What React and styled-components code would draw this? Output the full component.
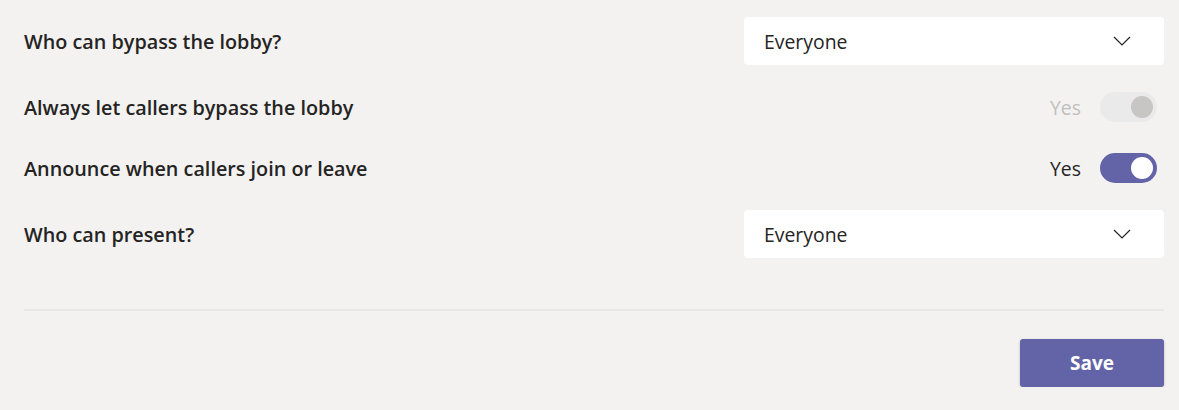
import React, { useState } from "react";
import styled, { createGlobalStyle } from "styled-components";

const GlobalStyle = createGlobalStyle`
  html, body {
    margin: 0;
    padding: 0;
    background: #f3f2f1;
    font-family: "Segoe UI", "Open Sans", "Noto Sans", sans-serif;
    color: #252423;
  }
`;

export default function App() {
  const [announce, setAnnounce] = useState(true);

  return (
    <>
      <GlobalStyle />
      <Page>
        <Row $top={17}>
          <Label>Who can bypass the lobby?</Label>
          <Select>
            <span>Everyone</span>
            <Chevron />
          </Select>
        </Row>
        <Row $top={27} $height={30}>
          <Label>Always let callers bypass the lobby</Label>
          <ToggleGroup>
            <ToggleText $disabled>Yes</ToggleText>
            <Toggle $on $disabled />
          </ToggleGroup>
        </Row>
        <Row $top={31} $height={30}>
          <Label>Announce when callers join or leave</Label>
          <ToggleGroup>
            <ToggleText>Yes</ToggleText>
            <Toggle $on={announce} onClick={() => setAnnounce(!announce)} />
          </ToggleGroup>
        </Row>
        <Row $top={27}>
          <Label>Who can present?</Label>
          <Select>
            <span>Everyone</span>
            <Chevron />
          </Select>
        </Row>
        <Divider />
        <Footer>
          <SaveButton>Save</SaveButton>
        </Footer>
      </Page>
    </>
  );
}

function Chevron() {
  return (
    <svg width="18" height="10" viewBox="0 0 18 10" fill="none">
      <path d="M1 1l8 8 8-8" stroke="#252423" strokeWidth="1.2" />
    </svg>
  );
}

const Page = styled.div`
  padding: 0 15px 0 24px;
  display: flex;
  flex-direction: column;
`;

const Row = styled.div`
  display: flex;
  align-items: center;
  justify-content: space-between;
  margin-top: ${(p) => p.$top}px;
  height: ${(p) => p.$height || 48}px;
`;

const Label = styled.div`
  font-size: 19.8px;
  font-weight: 600;
  color: #252423;
`;

const Select = styled.div`
  width: 420px;
  height: 48px;
  box-sizing: border-box;
  background: #fff;
  border-radius: 4px;
  display: flex;
  align-items: center;
  justify-content: space-between;
  padding: 0 33px 0 20px;
  font-size: 19.4px;
  color: #252423;
`;

const ToggleGroup = styled.div`
  display: flex;
  align-items: center;
  gap: 19px;
  margin-right: 7px;
`;

const ToggleText = styled.span`
  font-size: 19.4px;
  color: ${(p) => (p.$disabled ? "#c1bfbd" : "#252423")};
`;

const Toggle = styled.button`
  position: relative;
  width: 57px;
  height: 30px;
  border: none;
  border-radius: 15px;
  padding: 0;
  cursor: ${(p) => (p.$disabled ? "default" : "pointer")};
  background: ${(p) => (p.$disabled ? "#ebeaea" : p.$on ? "#6264a7" : "#fff")};
  &::after {
    content: "";
    position: absolute;
    top: 4px;
    left: ${(p) => (p.$on ? "31px" : "5px")};
    width: 22px;
    height: 22px;
    border-radius: 50%;
    background: ${(p) => (p.$disabled ? "#c8c6c4" : "#fff")};
  }
`;

const Divider = styled.hr`
  margin: 51px 0 0;
  border: none;
  height: 2px;
  background: #e9e7e5;
`;

const Footer = styled.div`
  display: flex;
  justify-content: flex-end;
  margin-top: 28px;
`;

const SaveButton = styled.button`
  width: 144px;
  height: 48px;
  border: none;
  border-radius: 3px;
  background: #6264a7;
  color: #fff;
  font-family: inherit;
  font-size: 19px;
  font-weight: 700;
  box-shadow: 0 1px 3px rgba(0, 0, 0, 0.2);
  cursor: pointer;
`;
